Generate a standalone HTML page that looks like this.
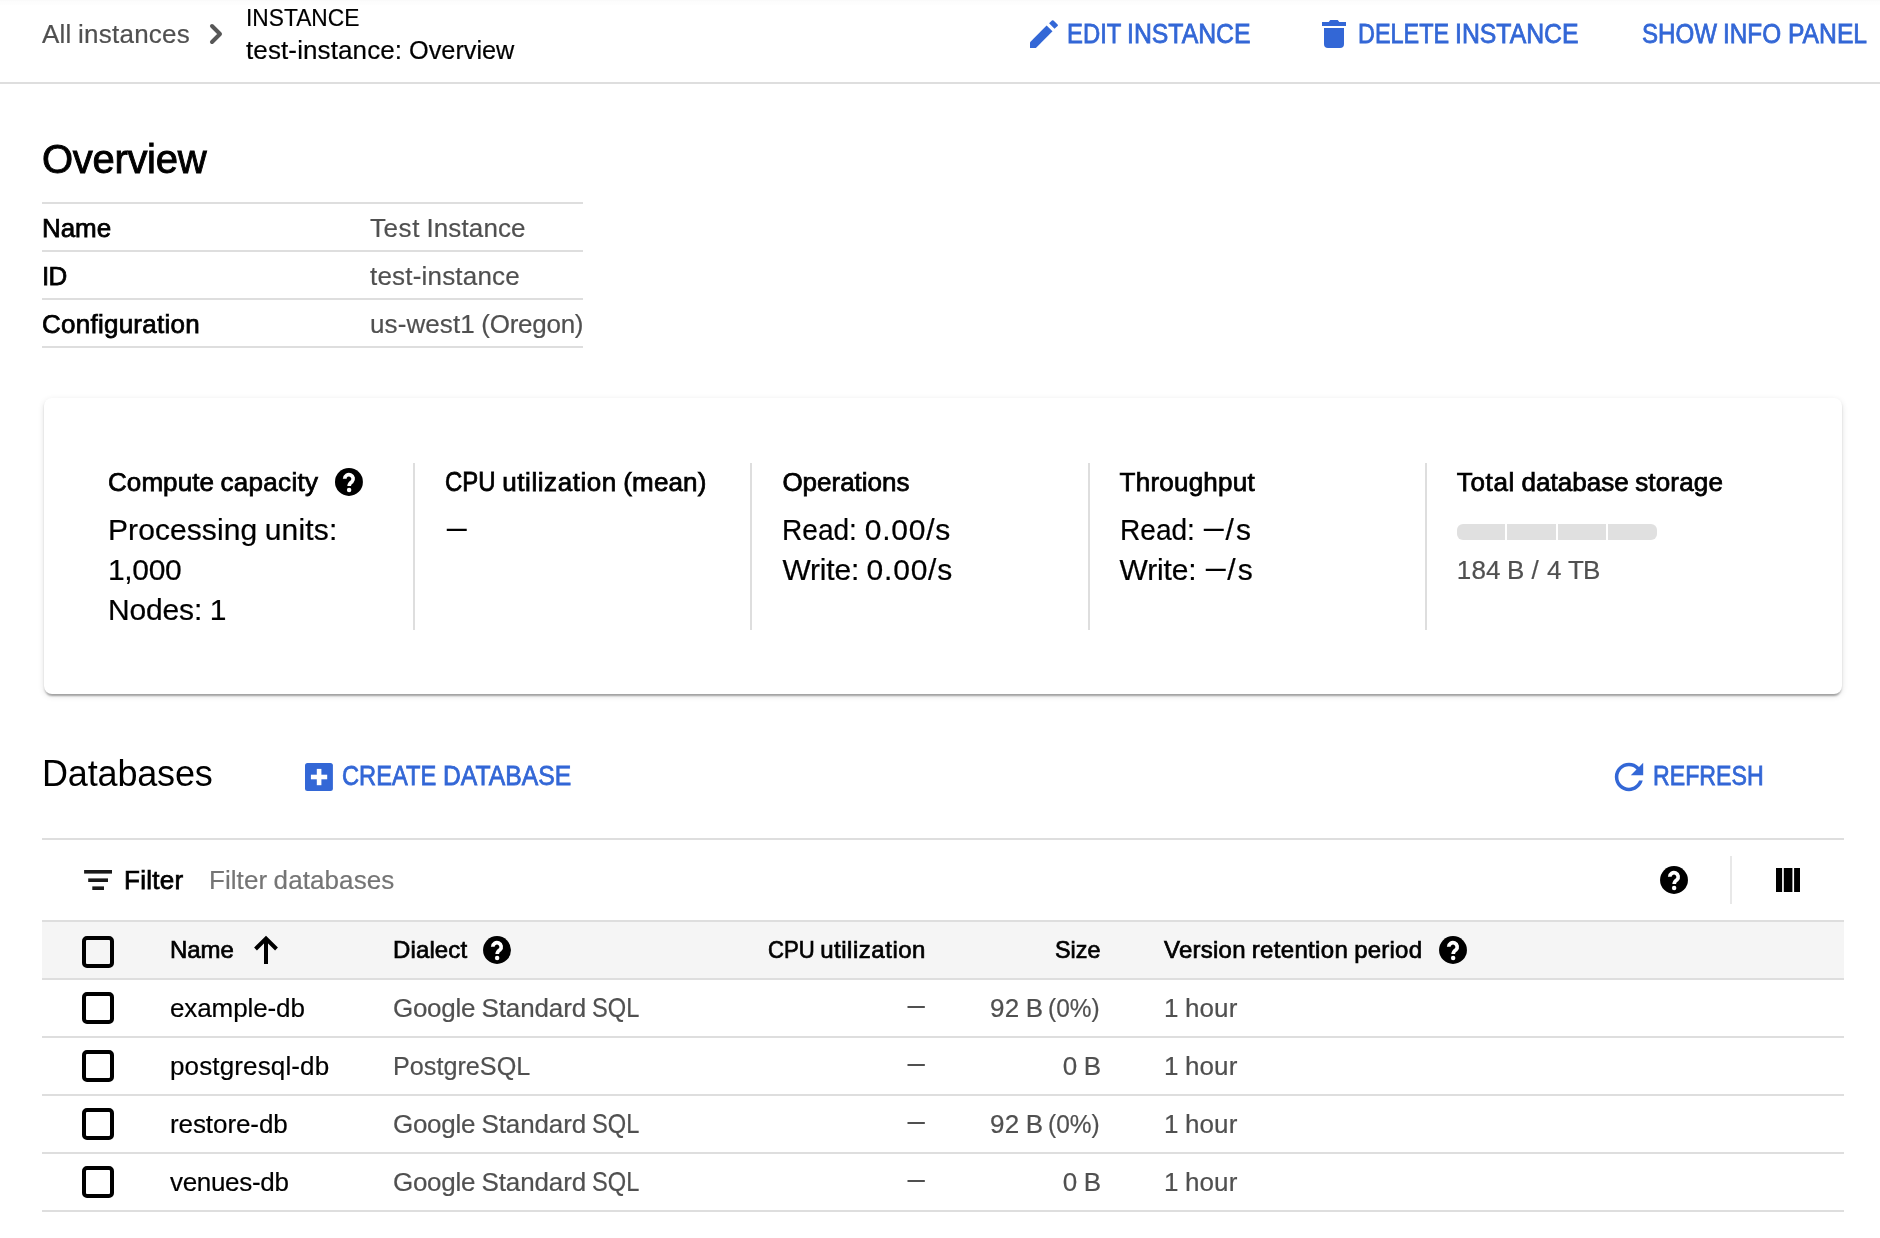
<!DOCTYPE html>
<html lang="en"><head><meta charset="utf-8"><title>test-instance: Overview</title>
<style>
html,body{margin:0;padding:0;background:#fff;}
body{width:1880px;height:1238px;position:relative;overflow:hidden;font-family:"Liberation Sans", sans-serif;}
.t{position:absolute;white-space:pre;display:block;margin:0;padding:0;font-weight:400;}
.d,.x,.c{display:inline-block;vertical-align:baseline;}
.c{text-align:center;}
.x{transform-origin:0 50%;}
.d>span{display:inline-block;transform-origin:0 50%;-webkit-text-stroke:0;}
.h{position:absolute;background:#dedede;height:2px;}
.v{position:absolute;background:#dedede;width:2px;}
#card{position:absolute;left:44px;top:398px;width:1798px;height:296px;border-radius:8px;background:#fff;
 box-shadow:0 4px 2px -2px rgba(0,0,0,.2),0 2px 2px 0 rgba(0,0,0,.14),0 2px 6px 0 rgba(0,0,0,.12);}
#topsh{position:absolute;left:0;top:0;width:1880px;height:5px;background:linear-gradient(rgba(0,0,0,.02) 0,rgba(0,0,0,.02) 1px,rgba(0,0,0,.008) 1.6px,rgba(0,0,0,.008) 4.4px,rgba(0,0,0,0) 5px);}
#thead{position:absolute;left:42px;top:922px;width:1802px;height:56px;background:#f5f5f5;}
.seg{position:absolute;top:524px;height:16px;background:#e0e0e0;}
svg{position:absolute;left:0;top:0;}
#txt{position:absolute;left:0;top:0;width:1880px;height:1238px;will-change:transform;}
</style></head>
<body>
<div id="topsh"></div>
<div id="card"></div>
<div id="thead"></div>
<div class="h" style="left:0px;top:82px;width:1880px"></div><div class="h" style="left:42px;top:202px;width:541px"></div><div class="h" style="left:42px;top:250px;width:541px"></div><div class="h" style="left:42px;top:298px;width:541px"></div><div class="h" style="left:42px;top:346px;width:541px"></div><div class="v" style="left:413px;top:462.5px;height:167.5px"></div><div class="v" style="left:750px;top:462.5px;height:167.5px"></div><div class="v" style="left:1087.5px;top:462.5px;height:167.5px"></div><div class="v" style="left:1424.5px;top:462.5px;height:167.5px"></div><div class="h" style="left:42px;top:838px;width:1802px"></div><div class="h" style="left:42px;top:920px;width:1802px"></div><div class="h" style="left:42px;top:978px;width:1802px"></div><div class="h" style="left:42px;top:1036px;width:1802px"></div><div class="h" style="left:42px;top:1094px;width:1802px"></div><div class="h" style="left:42px;top:1152px;width:1802px"></div><div class="h" style="left:42px;top:1210px;width:1802px"></div><div class="v" style="left:1730px;top:856px;height:48px;background:#e8e8e8"></div>
<div class="seg" style="left:1457px;width:48px;border-radius:6px 0 0 6px"></div><div class="seg" style="left:1507px;width:49px;border-radius:0"></div><div class="seg" style="left:1558px;width:48px;border-radius:0"></div><div class="seg" style="left:1608px;width:49px;border-radius:0 6px 6px 0"></div>
<svg width="1880" height="1238" viewBox="0 0 1880 1238">
<polyline points="212,26 220,34 212,42" fill="none" stroke="#575757" stroke-width="4" stroke-linecap="round" stroke-linejoin="round"/>
<polygon points="1030,47.9 1030,42.3 1046.6,25.5 1052.5,31.2 1035.9,47.9" fill="#3367d6"/>
<path d="M1049.1 23.3 L1051.9 20.6 Q1052.7 19.9 1053.5 20.6 L1057.6 24.5 Q1058.4 25.3 1057.6 26 L1054.5 28.8 Z" fill="#3367d6"/>
<rect x="1322" y="22" width="24" height="4" fill="#3367d6"/>
<polygon points="1330.3,20 1337.7,20 1339.3,22 1328.7,22" fill="#3367d6"/>
<path d="M1324 28 H1344 V44 Q1344 48 1340 48 H1328 Q1324 48 1324 44 Z" fill="#3367d6"/>
<g transform="translate(348.95 481.95)"><circle r="13.95" fill="#000"/><path d="M-4.2 -3.9 V-3.2 A4.2 4.2 0 1 1 3.0 -0.2 Q0.2 1.7 0.2 4.1" fill="none" stroke="#fff" stroke-width="3.7"/><circle cx="0.15" cy="8.05" r="2.25" fill="#fff"/></g>
<g transform="translate(1674 880)"><circle r="13.95" fill="#000"/><path d="M-4.2 -3.9 V-3.2 A4.2 4.2 0 1 1 3.0 -0.2 Q0.2 1.7 0.2 4.1" fill="none" stroke="#fff" stroke-width="3.7"/><circle cx="0.15" cy="8.05" r="2.25" fill="#fff"/></g>
<g transform="translate(497 950)"><circle r="13.95" fill="#000"/><path d="M-4.2 -3.9 V-3.2 A4.2 4.2 0 1 1 3.0 -0.2 Q0.2 1.7 0.2 4.1" fill="none" stroke="#fff" stroke-width="3.7"/><circle cx="0.15" cy="8.05" r="2.25" fill="#fff"/></g>
<g transform="translate(1453 950)"><circle r="13.95" fill="#000"/><path d="M-4.2 -3.9 V-3.2 A4.2 4.2 0 1 1 3.0 -0.2 Q0.2 1.7 0.2 4.1" fill="none" stroke="#fff" stroke-width="3.7"/><circle cx="0.15" cy="8.05" r="2.25" fill="#fff"/></g>
<rect x="305" y="763" width="27.9" height="27.9" rx="2.5" fill="#3367d6"/>
<rect x="316.8" y="768.9" width="4.6" height="16.3" fill="#fff"/><rect x="310.9" y="774.7" width="16.3" height="4.6" fill="#fff"/>
<path transform="translate(1607.70 755.70) scale(1.7750)" d="M17.65 6.35C16.2 4.9 14.21 4 12 4c-4.42 0-7.99 3.58-7.99 8s3.57 8 7.99 8c3.73 0 6.84-2.55 7.73-6h-2.08c-.82 2.33-3.04 4-5.65 4-3.31 0-6-2.69-6-6s2.69-6 6-6c1.66 0 3.14.69 4.22 1.78L13 11h7V4l-2.35 2.35z" fill="#3367d6"/>
<rect x="84.1" y="870" width="27.9" height="3.6" fill="#1a1a1a"/><rect x="88.2" y="878.4" width="19.8" height="3.6" fill="#1a1a1a"/><rect x="92.3" y="886.4" width="11.7" height="3.6" fill="#1a1a1a"/>
<rect x="1776" y="868" width="6.1" height="24" fill="#000"/><rect x="1783.8" y="868" width="8.6" height="24" fill="#000"/><rect x="1794.1" y="868" width="5.9" height="24" fill="#000"/>
<path d="M266 938.5 V964 M255.5 949 L266 938.5 L276.5 949" fill="none" stroke="#000" stroke-width="4" stroke-linejoin="miter"/>
<rect x="84" y="938" width="28" height="28" rx="3" ry="3" fill="none" stroke="#000" stroke-width="4"/>
<rect x="84" y="994" width="28" height="28" rx="3" ry="3" fill="none" stroke="#000" stroke-width="4"/>
<rect x="84" y="1052" width="28" height="28" rx="3" ry="3" fill="none" stroke="#000" stroke-width="4"/>
<rect x="84" y="1110" width="28" height="28" rx="3" ry="3" fill="none" stroke="#000" stroke-width="4"/>
<rect x="84" y="1168" width="28" height="28" rx="3" ry="3" fill="none" stroke="#000" stroke-width="4"/>
</svg>
<div id="txt">
<header id="header">
<span class="t" style="top:18px;font-size:26px;line-height:32px;color:#505050;-webkit-text-stroke:0.2px #505050;left:42px;"><span style="letter-spacing:0.234px">All</span><span style="letter-spacing:-0.781px"> </span><span style="letter-spacing:0.231px">instances</span></span>
<span class="t" style="top:4px;font-size:24px;line-height:28px;color:#000;-webkit-text-stroke:0.18px #000;left:246px;"><span class="x" style="width:113.34px;transform-origin:0 22px;transform:scale(0.9479,1.034)">INSTANCE</span></span>
<span class="t" style="top:34px;font-size:26px;line-height:32px;color:#000;-webkit-text-stroke:0.2px #000;left:246px;"><span style="letter-spacing:0.112px">test-instance:</span><span style="letter-spacing:-0.781px"> </span><span class="x" style="width:105.39px;transform-origin:0 25px;transform:scale(0.9726,1.0)">Overview</span></span>
<span class="t" style="top:18px;font-size:26px;line-height:32px;color:#3367d6;-webkit-text-stroke:0.75px #3367d6;left:1067px;"><span class="x" style="width:53.91px;transform-origin:0 25px;transform:scale(0.9173,1.034)">EDIT</span><span style="letter-spacing:-0.766px"> </span><span class="x" style="width:123.56px;transform-origin:0 25px;transform:scale(0.9539,1.034)">INSTANCE</span></span>
<span class="t" style="top:18px;font-size:26px;line-height:32px;color:#3367d6;-webkit-text-stroke:0.75px #3367d6;left:1357.5px;"><span class="x" style="width:91.19px;transform-origin:0 25px;transform:scale(0.9015,1.034)">DELETE</span><span style="letter-spacing:-0.766px"> </span><span class="x" style="width:123.56px;transform-origin:0 25px;transform:scale(0.9539,1.034)">INSTANCE</span></span>
<span class="t" style="top:18px;font-size:26px;line-height:32px;color:#3367d6;-webkit-text-stroke:0.75px #3367d6;left:1642px;"><span class="x" style="width:75.00px;transform-origin:0 25px;transform:scale(0.9272,1.034)">SHOW</span><span style="letter-spacing:-0.766px"> </span><span class="x" style="width:58.05px;transform-origin:0 25px;transform:scale(0.9346,1.034)">INFO</span><span style="letter-spacing:-0.766px"> </span><span class="x" style="width:79.08px;transform-origin:0 25px;transform:scale(0.9488,1.034)">PANEL</span></span>
</header>
<section id="overview">
<h1 class="t" style="top:135px;font-size:40px;line-height:48px;color:#000;-webkit-text-stroke:0.9px #000;left:42px;"><span style="letter-spacing:-0.311px">Overview</span></h1>
<span class="t" style="top:212px;font-size:26px;line-height:32px;color:#000;-webkit-text-stroke:0.75px #000;left:42px;"><span style="letter-spacing:-0.078px">Name</span></span>
<span class="t" style="top:212px;font-size:26px;line-height:32px;color:#505050;-webkit-text-stroke:0.2px #505050;left:370px;"><span style="letter-spacing:0.570px">Test</span><span style="letter-spacing:-0.781px"> </span><span style="letter-spacing:0.121px">Instance</span></span>
<span class="t" style="top:260px;font-size:26px;line-height:32px;color:#000;-webkit-text-stroke:0.75px #000;left:42px;"><span style="letter-spacing:-0.828px">ID</span></span>
<span class="t" style="top:260px;font-size:26px;line-height:32px;color:#505050;-webkit-text-stroke:0.2px #505050;left:370px;"><span style="letter-spacing:0.192px">test-instance</span></span>
<span class="t" style="top:308px;font-size:26px;line-height:32px;color:#000;-webkit-text-stroke:0.75px #000;left:42px;"><span style="letter-spacing:0.246px">Configuration</span></span>
<span class="t" style="top:308px;font-size:26px;line-height:32px;color:#505050;-webkit-text-stroke:0.2px #505050;left:370px;"><span style="letter-spacing:0.096px">us-west1</span><span style="letter-spacing:-0.781px"> </span><span style="letter-spacing:-0.258px">(Oregon)</span></span>
</section>
<section id="metrics">
<span class="t" style="top:466px;font-size:26px;line-height:32px;color:#000;-webkit-text-stroke:0.75px #000;left:108px;"><span style="letter-spacing:0.076px">Compute</span><span style="letter-spacing:-0.766px"> </span><span style="letter-spacing:0.303px">capacity</span></span>
<span class="t" style="top:512px;font-size:30px;line-height:36px;color:#000;-webkit-text-stroke:0.22px #000;left:108px;"><span style="letter-spacing:0.080px">Processing</span><span style="letter-spacing:-0.891px"> </span><span style="letter-spacing:0.208px">units:</span></span>
<span class="t" style="top:552px;font-size:30px;line-height:36px;color:#000;-webkit-text-stroke:0.22px #000;left:108px;"><span style="letter-spacing:-0.344px">1,000</span></span>
<span class="t" style="top:592px;font-size:30px;line-height:36px;color:#000;-webkit-text-stroke:0.22px #000;left:108px;"><span style="letter-spacing:-0.161px">Nodes:</span><span style="letter-spacing:-0.891px"> </span><span class="c" style="width:16.88px">1</span></span>
<span class="t" style="top:466px;font-size:26px;line-height:32px;color:#000;-webkit-text-stroke:0.75px #000;left:445.2px;"><span class="x" style="width:50.58px;transform-origin:0 25px;transform:scale(0.9212,1.034)">CPU</span><span style="letter-spacing:-0.766px"> </span><span style="letter-spacing:0.564px">utilization</span><span style="letter-spacing:-0.766px"> </span><span style="letter-spacing:0.133px">(mean)</span></span>
<span class="t" style="top:512px;font-size:30px;line-height:36px;color:#000;-webkit-text-stroke:0.22px #000;left:445.2px;"><span class="d" style="width:23.44px"><span style="transform:translate(1.86px,-3.45px) scale(0.667,1.12)">—</span></span></span>
<span class="t" style="top:466px;font-size:26px;line-height:32px;color:#000;-webkit-text-stroke:0.75px #000;left:782.4px;"><span style="letter-spacing:-0.009px">Operations</span></span>
<span class="t" style="top:512px;font-size:30px;line-height:36px;color:#000;-webkit-text-stroke:0.22px #000;left:782.4px;"><span class="x" style="width:74.91px;transform-origin:0 28px;transform:scale(0.9356,1.0)">Read:</span><span style="letter-spacing:-0.891px"> </span><span style="letter-spacing:0.771px">0.00/s</span></span>
<span class="t" style="top:552px;font-size:30px;line-height:36px;color:#000;-webkit-text-stroke:0.22px #000;left:782.4px;"><span style="letter-spacing:-0.172px">Write:</span><span style="letter-spacing:-0.891px"> </span><span style="letter-spacing:0.771px">0.00/s</span></span>
<span class="t" style="top:466px;font-size:26px;line-height:32px;color:#000;-webkit-text-stroke:0.75px #000;left:1119.6px;"><span style="letter-spacing:0.231px">Throughput</span></span>
<span class="t" style="top:512px;font-size:30px;line-height:36px;color:#000;-webkit-text-stroke:0.22px #000;left:1119.6px;"><span class="x" style="width:74.91px;transform-origin:0 28px;transform:scale(0.9356,1.0)">Read:</span><span style="letter-spacing:-0.891px"> </span><span class="d" style="width:23.44px"><span style="transform:translate(1.86px,-3.45px) scale(0.667,1.12)">—</span></span><span style="letter-spacing:2.266px">/s</span></span>
<span class="t" style="top:552px;font-size:30px;line-height:36px;color:#000;-webkit-text-stroke:0.22px #000;left:1119.6px;"><span style="letter-spacing:-0.172px">Write:</span><span style="letter-spacing:-0.891px"> </span><span class="d" style="width:23.44px"><span style="transform:translate(1.86px,-3.45px) scale(0.667,1.12)">—</span></span><span style="letter-spacing:2.266px">/s</span></span>
<span class="t" style="top:466px;font-size:26px;line-height:32px;color:#000;-webkit-text-stroke:0.75px #000;left:1456.8px;"><span style="letter-spacing:0.644px">Total</span><span style="letter-spacing:-0.766px"> </span><span style="letter-spacing:0.037px">database</span><span style="letter-spacing:-0.766px"> </span><span style="letter-spacing:0.167px">storage</span></span>
<span class="t" style="top:554px;font-size:26px;line-height:32px;color:#505050;-webkit-text-stroke:0.2px #505050;left:1456.8px;"><span style="letter-spacing:0.151px">184</span><span style="letter-spacing:-0.781px"> </span><span class="c" style="width:16.20px">B</span><span style="letter-spacing:-0.781px"> </span><span class="c" style="width:10.73px">/</span><span style="letter-spacing:-0.781px"> </span><span class="c" style="width:14.62px">4</span><span style="letter-spacing:-0.812px"> </span><span style="letter-spacing:-0.758px">TB</span></span>
</section>
<section id="databases">
<h2 class="t" style="top:752px;font-size:36px;line-height:44px;color:#000;-webkit-text-stroke:0px #000;left:42px;"><span style="letter-spacing:-0.165px">Databases</span></h2>
<span class="t" style="top:760px;font-size:26px;line-height:32px;color:#3367d6;-webkit-text-stroke:0.75px #3367d6;left:342px;"><span class="x" style="width:94.20px;transform-origin:0 25px;transform:scale(0.9099,1.034)">CREATE</span><span style="letter-spacing:-0.766px"> </span><span class="x" style="width:128.33px;transform-origin:0 25px;transform:scale(0.9516,1.034)">DATABASE</span></span>
<span class="t" style="top:760px;font-size:26px;line-height:32px;color:#3367d6;-webkit-text-stroke:0.75px #3367d6;left:1653px;"><span class="x" style="width:110.62px;transform-origin:0 25px;transform:scale(0.8903,1.034)">REFRESH</span></span>
<span class="t" style="top:864px;font-size:26px;line-height:32px;color:#000;-webkit-text-stroke:0.75px #000;left:124px;"><span style="letter-spacing:0.263px">Filter</span></span>
<span class="t" style="top:864px;font-size:26px;line-height:32px;color:#757575;-webkit-text-stroke:0.2px #757575;left:209px;"><span style="letter-spacing:0.057px">Filter</span><span style="letter-spacing:-0.781px"> </span><span style="letter-spacing:0.094px">databases</span></span>
<span class="t" style="top:936px;font-size:24px;line-height:28px;color:#000;-webkit-text-stroke:0.7px #000;left:170px;"><span style="letter-spacing:-0.074px">Name</span></span>
<span class="t" style="top:936px;font-size:24px;line-height:28px;color:#000;-webkit-text-stroke:0.7px #000;left:393px;"><span style="letter-spacing:0.123px">Dialect</span></span>
<span class="t" style="top:936px;font-size:24px;line-height:28px;color:#000;-webkit-text-stroke:0.7px #000;right:954.00px;"><span class="x" style="width:46.69px;transform-origin:0 22px;transform:scale(0.9214,1.034)">CPU</span><span style="letter-spacing:-0.703px"> </span><span style="letter-spacing:0.521px">utilization</span></span>
<span class="t" style="top:936px;font-size:24px;line-height:28px;color:#000;-webkit-text-stroke:0.7px #000;right:780.00px;"><span class="x" style="width:45.39px;transform-origin:0 22px;transform:scale(0.9722,1.0)">Size</span></span>
<span class="t" style="top:936px;font-size:24px;line-height:28px;color:#000;-webkit-text-stroke:0.7px #000;left:1164px;"><span style="letter-spacing:0.243px">Version</span><span style="letter-spacing:-0.703px"> </span><span style="letter-spacing:0.335px">retention</span><span style="letter-spacing:-0.703px"> </span><span style="letter-spacing:0.229px">period</span></span>
<span class="t" style="top:992px;font-size:26px;line-height:32px;color:#000;-webkit-text-stroke:0.2px #000;left:170px;"><span style="letter-spacing:-0.106px">example-db</span></span>
<span class="t" style="top:992px;font-size:26px;line-height:32px;color:#505050;-webkit-text-stroke:0.2px #505050;left:393px;"><span style="letter-spacing:-0.294px">Google</span><span style="letter-spacing:-0.781px"> </span><span style="letter-spacing:-0.131px">Standard</span><span style="letter-spacing:-0.781px"> </span><span class="x" style="width:47.33px;transform-origin:0 25px;transform:scale(0.9096,1.034)">SQL</span></span>
<span class="t" style="top:992px;font-size:26px;line-height:32px;color:#505050;-webkit-text-stroke:0.2px #505050;right:954.00px;"><span class="d" style="width:20.31px"><span style="transform:translate(1.61px,-2.99px) scale(0.667,1.12)">—</span></span></span>
<span class="t" style="top:992px;font-size:26px;line-height:32px;color:#505050;-webkit-text-stroke:0.2px #505050;right:780.00px;"><span style="letter-spacing:0.156px">92</span><span style="letter-spacing:-0.781px"> </span><span class="c" style="width:16.20px">B</span><span style="letter-spacing:-0.781px"> </span><span class="x" style="width:51.61px;transform-origin:0 25px;transform:scale(0.9400,1.0)">(0%)</span></span>
<span class="t" style="top:992px;font-size:26px;line-height:32px;color:#505050;-webkit-text-stroke:0.2px #505050;left:1164px;"><span class="c" style="width:14.62px">1</span><span style="letter-spacing:-0.781px"> </span><span style="letter-spacing:0.062px">hour</span></span>
<span class="t" style="top:1050px;font-size:26px;line-height:32px;color:#000;-webkit-text-stroke:0.2px #000;left:170px;"><span style="letter-spacing:0.133px">postgresql-db</span></span>
<span class="t" style="top:1050px;font-size:26px;line-height:32px;color:#505050;-webkit-text-stroke:0.2px #505050;left:393px;"><span class="x" style="width:137.28px;transform-origin:0 25px;transform:scale(0.9692,1.0)">PostgreSQL</span></span>
<span class="t" style="top:1050px;font-size:26px;line-height:32px;color:#505050;-webkit-text-stroke:0.2px #505050;right:954.00px;"><span class="d" style="width:20.31px"><span style="transform:translate(1.61px,-2.99px) scale(0.667,1.12)">—</span></span></span>
<span class="t" style="top:1050px;font-size:26px;line-height:32px;color:#505050;-webkit-text-stroke:0.2px #505050;right:780.00px;"><span class="c" style="width:14.62px">0</span><span style="letter-spacing:-0.781px"> </span><span class="c" style="width:16.20px">B</span></span>
<span class="t" style="top:1050px;font-size:26px;line-height:32px;color:#505050;-webkit-text-stroke:0.2px #505050;left:1164px;"><span class="c" style="width:14.62px">1</span><span style="letter-spacing:-0.781px"> </span><span style="letter-spacing:0.062px">hour</span></span>
<span class="t" style="top:1108px;font-size:26px;line-height:32px;color:#000;-webkit-text-stroke:0.2px #000;left:170px;"><span style="letter-spacing:-0.083px">restore-db</span></span>
<span class="t" style="top:1108px;font-size:26px;line-height:32px;color:#505050;-webkit-text-stroke:0.2px #505050;left:393px;"><span style="letter-spacing:-0.294px">Google</span><span style="letter-spacing:-0.781px"> </span><span style="letter-spacing:-0.131px">Standard</span><span style="letter-spacing:-0.781px"> </span><span class="x" style="width:47.33px;transform-origin:0 25px;transform:scale(0.9096,1.034)">SQL</span></span>
<span class="t" style="top:1108px;font-size:26px;line-height:32px;color:#505050;-webkit-text-stroke:0.2px #505050;right:954.00px;"><span class="d" style="width:20.31px"><span style="transform:translate(1.61px,-2.99px) scale(0.667,1.12)">—</span></span></span>
<span class="t" style="top:1108px;font-size:26px;line-height:32px;color:#505050;-webkit-text-stroke:0.2px #505050;right:780.00px;"><span style="letter-spacing:0.156px">92</span><span style="letter-spacing:-0.781px"> </span><span class="c" style="width:16.20px">B</span><span style="letter-spacing:-0.781px"> </span><span class="x" style="width:51.61px;transform-origin:0 25px;transform:scale(0.9400,1.0)">(0%)</span></span>
<span class="t" style="top:1108px;font-size:26px;line-height:32px;color:#505050;-webkit-text-stroke:0.2px #505050;left:1164px;"><span class="c" style="width:14.62px">1</span><span style="letter-spacing:-0.781px"> </span><span style="letter-spacing:0.062px">hour</span></span>
<span class="t" style="top:1166px;font-size:26px;line-height:32px;color:#000;-webkit-text-stroke:0.2px #000;left:170px;"><span style="letter-spacing:-0.318px">venues-db</span></span>
<span class="t" style="top:1166px;font-size:26px;line-height:32px;color:#505050;-webkit-text-stroke:0.2px #505050;left:393px;"><span style="letter-spacing:-0.294px">Google</span><span style="letter-spacing:-0.781px"> </span><span style="letter-spacing:-0.131px">Standard</span><span style="letter-spacing:-0.781px"> </span><span class="x" style="width:47.33px;transform-origin:0 25px;transform:scale(0.9096,1.034)">SQL</span></span>
<span class="t" style="top:1166px;font-size:26px;line-height:32px;color:#505050;-webkit-text-stroke:0.2px #505050;right:954.00px;"><span class="d" style="width:20.31px"><span style="transform:translate(1.61px,-2.99px) scale(0.667,1.12)">—</span></span></span>
<span class="t" style="top:1166px;font-size:26px;line-height:32px;color:#505050;-webkit-text-stroke:0.2px #505050;right:780.00px;"><span class="c" style="width:14.62px">0</span><span style="letter-spacing:-0.781px"> </span><span class="c" style="width:16.20px">B</span></span>
<span class="t" style="top:1166px;font-size:26px;line-height:32px;color:#505050;-webkit-text-stroke:0.2px #505050;left:1164px;"><span class="c" style="width:14.62px">1</span><span style="letter-spacing:-0.781px"> </span><span style="letter-spacing:0.062px">hour</span></span>
</section>
</div>
</body></html>
